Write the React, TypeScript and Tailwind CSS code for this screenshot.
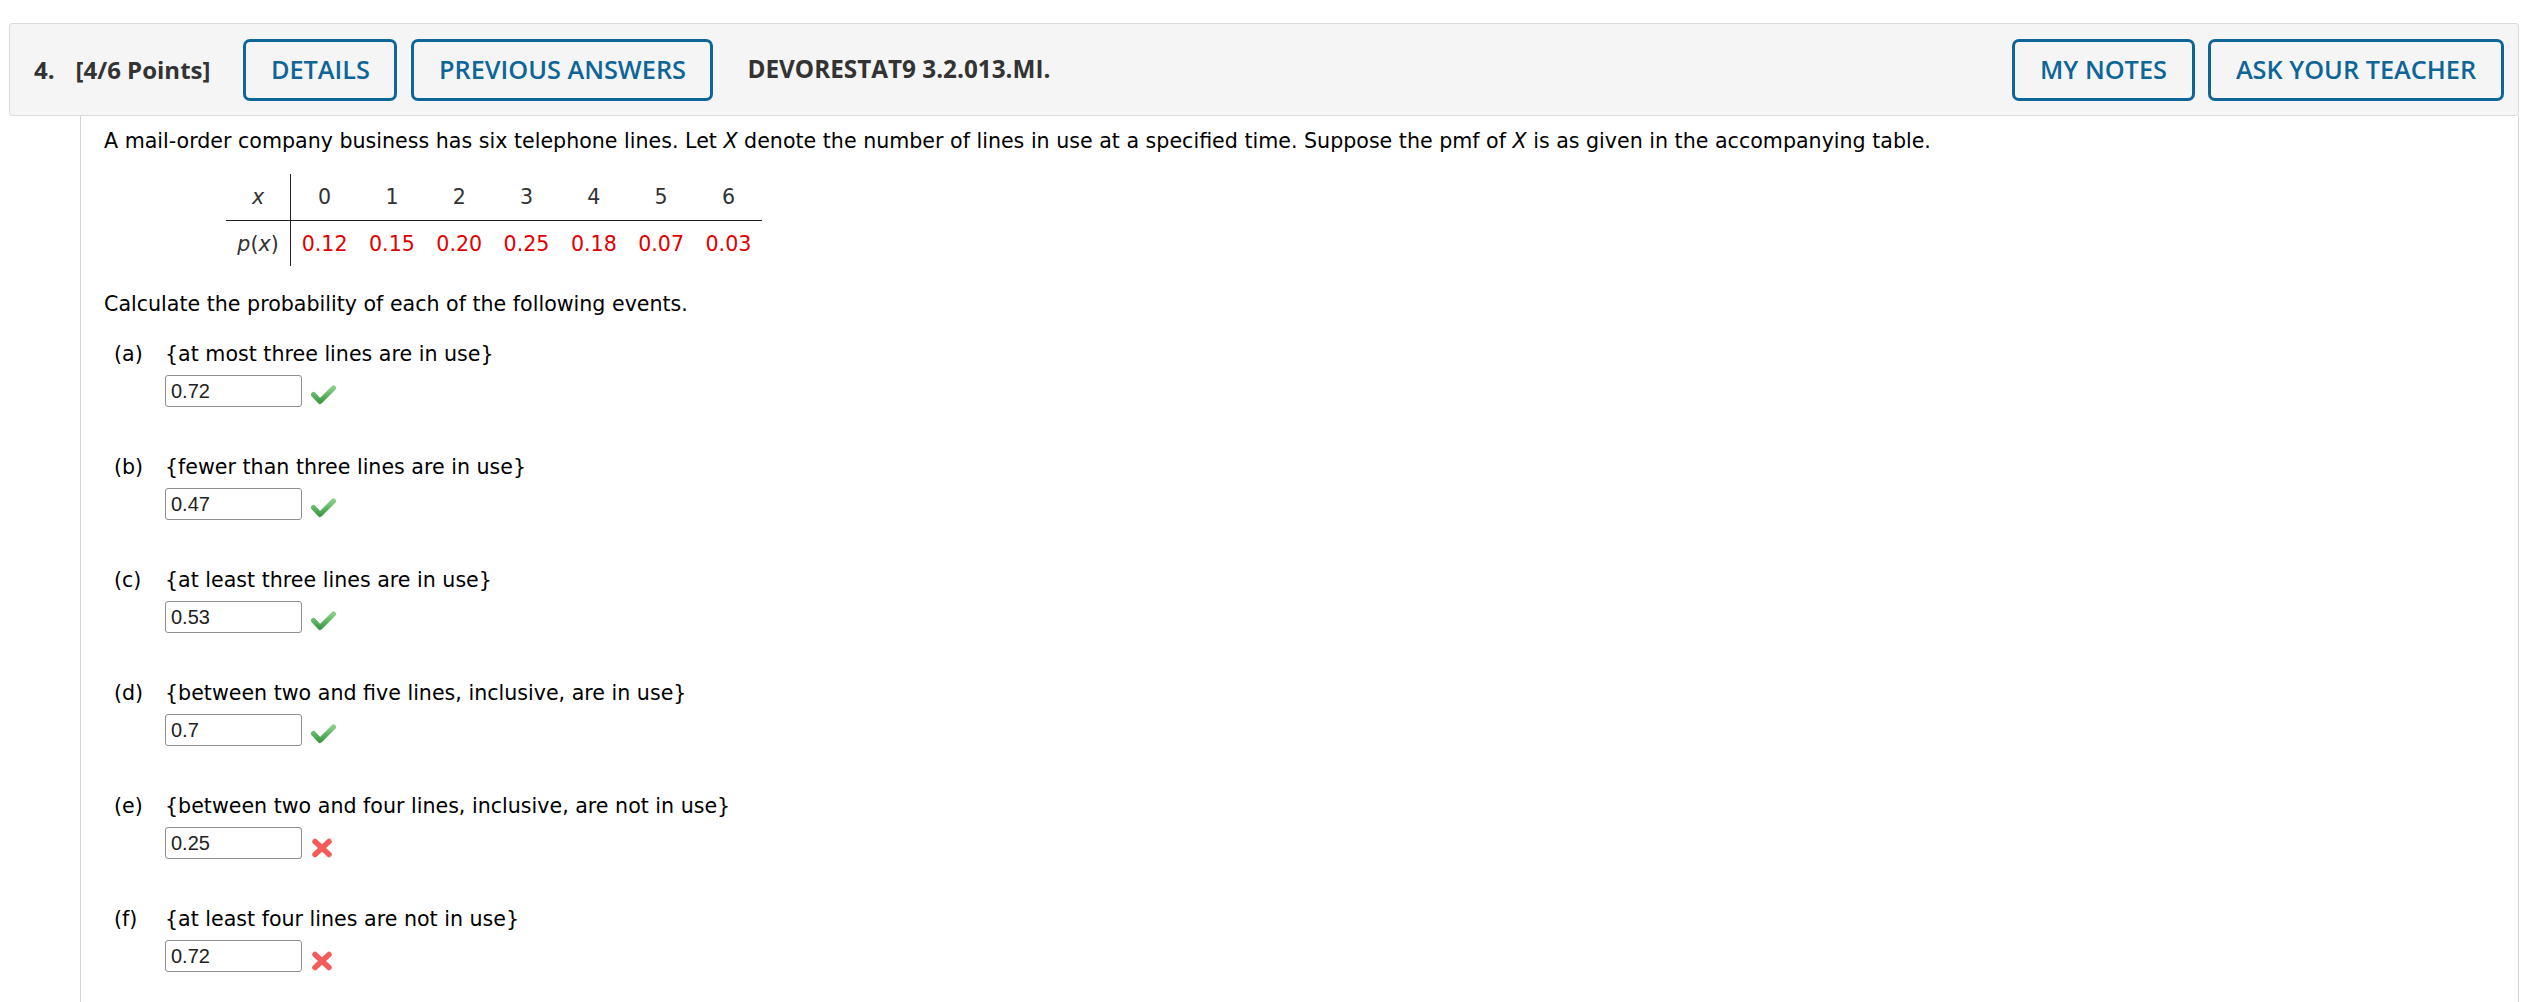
import React from "react";

function Check() {
  return (
    <svg width="25" height="20" viewBox="0 0 25 20" className="ml-[9px] mt-[10px] shrink-0">
      <defs>
        <linearGradient id="chk" x1="0" y1="0" x2="0" y2="1">
          <stop offset="0" stopColor="#86d086" />
          <stop offset="1" stopColor="#3e9b45" />
        </linearGradient>
      </defs>
      <path d="M2.5 9.5 L9 16.5 L22.5 3" fill="none" stroke="url(#chk)" strokeWidth="5" strokeLinejoin="round" strokeLinecap="round" />
    </svg>
  );
}

function Cross() {
  return (
    <svg width="22" height="20" viewBox="0 0 22 20" className="ml-[9px] mt-[11px] shrink-0">
      <path d="M4 3.5 L18 16.5 M18 3.5 L4 16.5" fill="none" stroke="#f45c5c" strokeWidth="5.5" strokeLinecap="round" />
    </svg>
  );
}

function Btn({ w, children, className = "" }: { w: string; children: React.ReactNode; className?: string }) {
  return (
    <div
      className={`${w} ${className} h-[62px] shrink-0 flex items-center justify-center border-[3px] border-[#0d6598] rounded-[7px] text-[#0d6598] font-semibold text-[25.3px]`}
    >
      {children}
    </div>
  );
}

const items: { l: string; t: string; v: string; ok: boolean }[] = [
  { l: "(a)", t: "{at most three lines are in use}", v: "0.72", ok: true },
  { l: "(b)", t: "{fewer than three lines are in use}", v: "0.47", ok: true },
  { l: "(c)", t: "{at least three lines are in use}", v: "0.53", ok: true },
  { l: "(d)", t: "{between two and five lines, inclusive, are in use}", v: "0.7", ok: true },
  { l: "(e)", t: "{between two and four lines, inclusive, are not in use}", v: "0.25", ok: false },
  { l: "(f)", t: "{at least four lines are not in use}", v: "0.72", ok: false },
];

const xs = ["0", "1", "2", "3", "4", "5", "6"];
const ps = ["0.12", "0.15", "0.20", "0.25", "0.18", "0.07", "0.03"];

export default function App() {
  return (
    <div className="w-[2528px] h-[1002px] bg-white overflow-hidden pt-[23px] px-[9px] flex flex-col">
      <div className="h-[93px] shrink-0 flex items-center border border-[#dcdcdc] rounded-[3px] bg-[#f5f5f5] pl-[24px] pr-[14px] [font-family:'Open_Sans',sans-serif] text-[24px] text-[#333]">
        <span className="font-bold">4.</span>
        <span className="font-bold ml-[21px]">[4/6 Points]</span>
        <Btn w="w-[154px]" className="ml-[33px]">DETAILS</Btn>
        <Btn w="w-[302px]" className="ml-[14px]">PREVIOUS ANSWERS</Btn>
        <span className="font-bold ml-[34px] text-[24.3px]">DEVORESTAT9 3.2.013.MI.</span>
        <div className="ml-auto flex gap-[13px]">
          <Btn w="w-[183px]">MY NOTES</Btn>
          <Btn w="w-[296px]">ASK YOUR TEACHER</Btn>
        </div>
      </div>
      <div className="flex-1 ml-[71px] border-l border-r border-[#d4d4d4] pl-[23px] pt-[11px] [font-family:'DejaVu_Sans',sans-serif] text-[20.6px] leading-[28px] text-black">
        <p>
          A mail-order company business has six telephone lines. Let <i>X</i> denote the number of lines in use at a
          specified time. Suppose the pmf of <i>X</i> is as given in the accompanying table.
        </p>
        <div className="mt-[19px] ml-[122px] grid grid-cols-[65px_repeat(7,67.3px)] text-[#333]">
          <div className="h-[47px] flex items-center justify-center border-r border-b border-[#222]">
            <i>x</i>
          </div>
          {xs.map((x) => (
            <div key={x} className="h-[47px] flex items-center justify-center border-b border-[#222]">
              {x}
            </div>
          ))}
          <div className="h-[45px] flex items-center justify-center border-r border-[#222]">
            <span>
              <i>p</i>(<i>x</i>)
            </span>
          </div>
          {ps.map((p, i) => (
            <div key={i} className="h-[45px] flex items-center justify-center text-[#e00000]">
              {p}
            </div>
          ))}
        </div>
        <p className="mt-[24px]">Calculate the probability of each of the following events.</p>
        <div className="mt-[22px] flex flex-col gap-[46px]">
          {items.map((it) => (
            <div key={it.l} className="flex">
              <span className="w-[61px] pl-[10px] shrink-0">{it.l}</span>
              <div>
                <div>{it.t}</div>
                <div className="mt-[7px] flex items-start">
                  <div className="w-[137px] h-[32px] border border-[#8f8f8f] rounded-[3px] pl-[5px] flex items-center [font-family:'Liberation_Sans',Arial,sans-serif] text-[20px] text-[#222] bg-white">
                    {it.v}
                  </div>
                  {it.ok ? <Check /> : <Cross />}
                </div>
              </div>
            </div>
          ))}
        </div>
      </div>
    </div>
  );
}
